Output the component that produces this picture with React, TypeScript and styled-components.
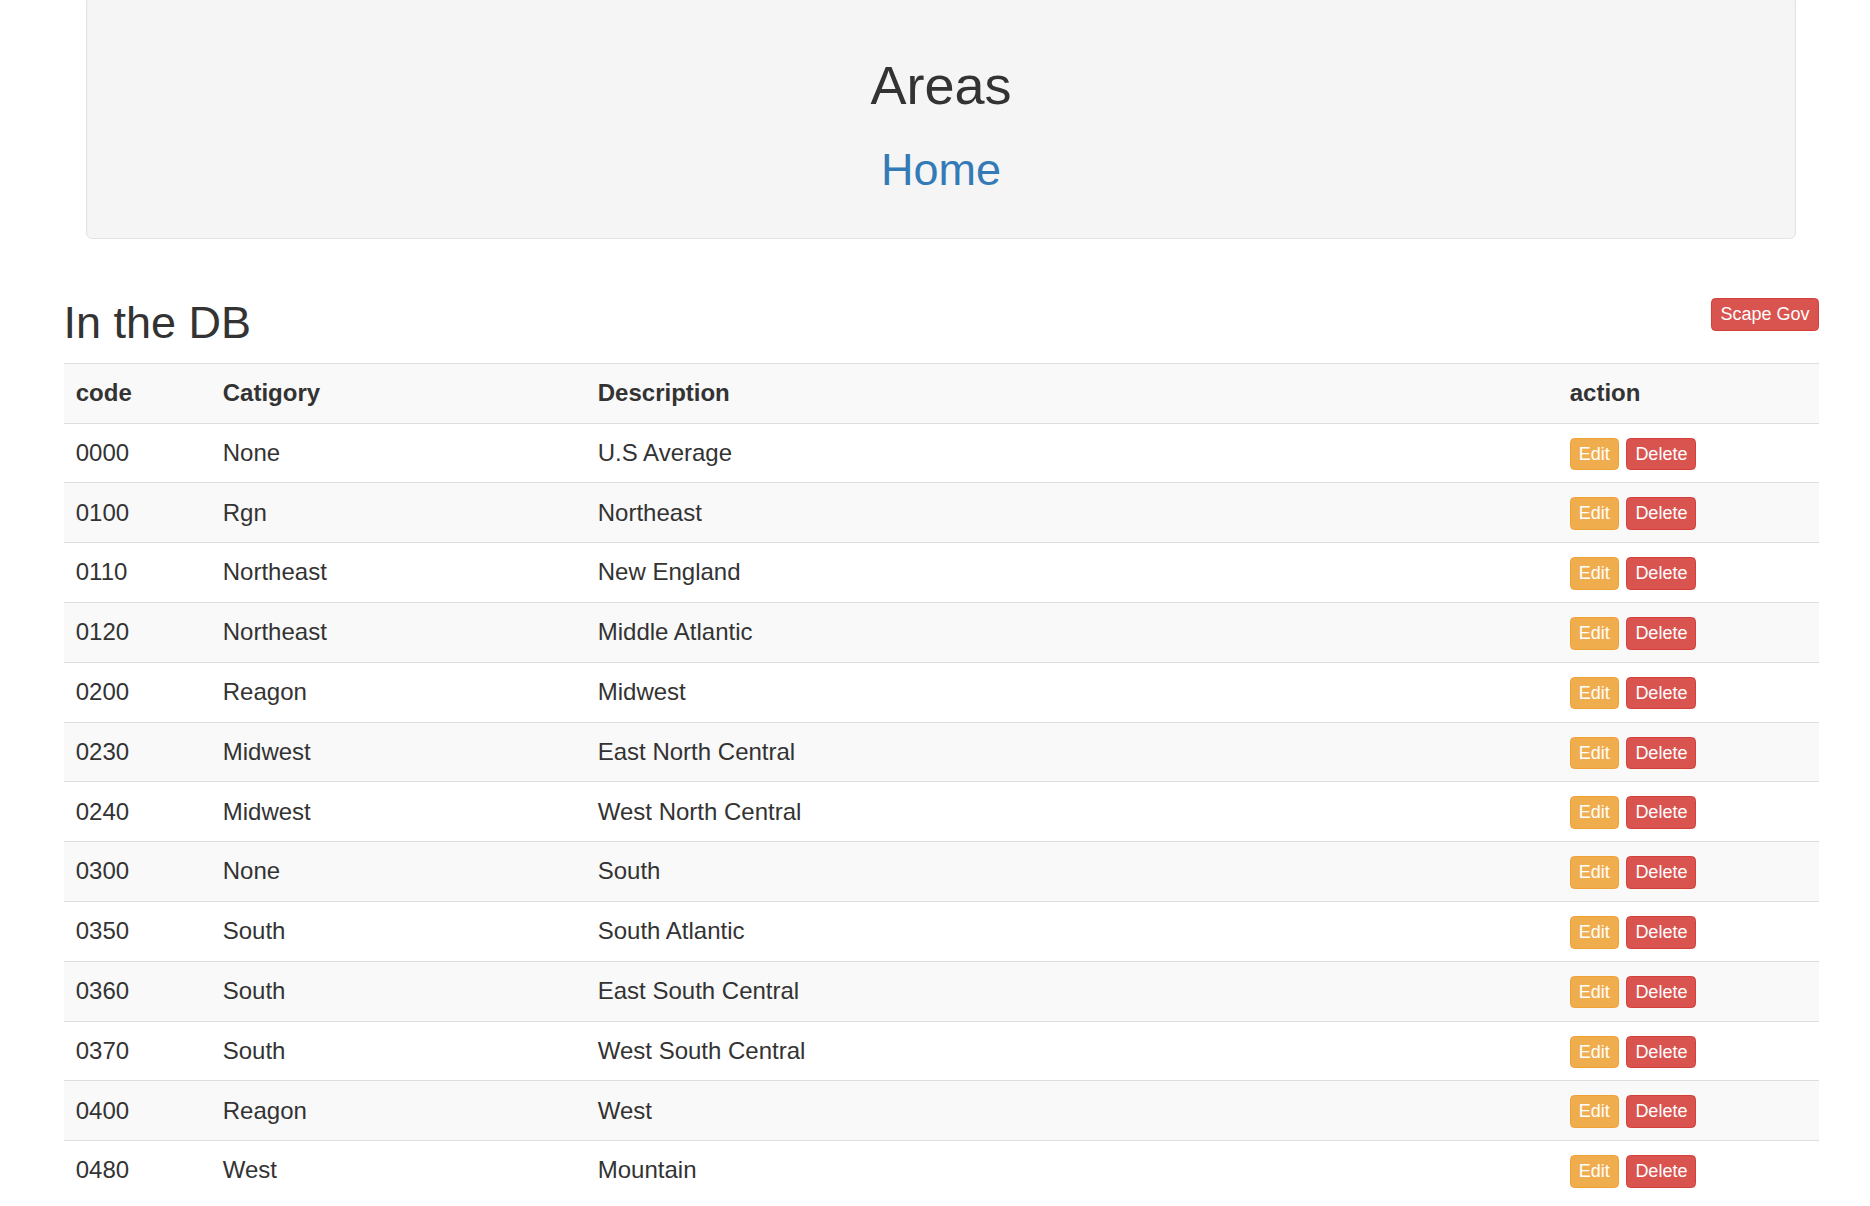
import React from "react";
import styled, { createGlobalStyle } from "styled-components";

const GlobalStyle = createGlobalStyle`
  html, body {
    margin: 0;
    padding: 0;
    overflow: hidden;
    background: #fff;
  }
  body {
    font-family: "Liberation Sans", Arial, Helvetica, sans-serif;
    font-size: 24px;
    line-height: 1.42857143;
    color: #333;
  }
  * { box-sizing: border-box; }
`;

const Container = styled.div`
  width: 1755px;
  margin-left: 63.5px;
  padding: 0 22.5px;
`;

const Well = styled.div`
  margin-top: -3.9px;
  margin-bottom: 30px;
  padding: 28.5px;
  background: #f5f5f5;
  border: 1px solid #e3e3e3;
  border-radius: 6px;
  box-shadow: inset 0 1.5px 1.5px rgba(0, 0, 0, 0.05);
  text-align: center;
`;

const PageTitle = styled.h1`
  margin: 30px 0 15px;
  font-size: 54px;
  line-height: 1.1;
  font-weight: 500;
  color: #333;
`;

const SubTitle = styled.h2`
  margin: 30px 0 15px;
  font-size: 45px;
  line-height: 1.1;
  font-weight: 500;
`;

const HomeLink = styled.a`
  color: #337ab7;
  text-decoration: none;
`;

const Row = styled.div`
  display: flow-root;
  margin: 0 -22.5px;
`;

const SectionHeader = styled.div`
  display: flex;
  justify-content: space-between;
  align-items: flex-start;
  margin-top: 29.3px;
`;

const SectionTitle = styled.h2`
  margin: 0 0 15px;
  font-size: 45px;
  line-height: 1.1;
  font-weight: 500;
  color: #333;
`;

const Button = styled.button<{ $variant: "danger" | "warning" }>`
  display: inline-block;
  margin: 0;
  padding: 2px 8px;
  font-family: inherit;
  font-size: 18px;
  line-height: 27px;
  font-weight: 400;
  color: #fff;
  white-space: nowrap;
  vertical-align: middle;
  cursor: pointer;
  border-radius: 4.5px;
  border: 1px solid
    ${(p) => (p.$variant === "danger" ? "#d43f3a" : "#eea236")};
  background: ${(p) => (p.$variant === "danger" ? "#d9534f" : "#f0ad4e")};
`;

const Table = styled.table`
  width: 100%;
  table-layout: fixed;
  border-collapse: collapse;
  border-spacing: 0;
  margin-bottom: 30px;
`;

const TR = styled.tr`
  &:nth-of-type(odd) {
    background: #f9f9f9;
  }
`;

const TH = styled.th`
  padding: 12.25px;
  line-height: 34.29px;
  text-align: left;
  font-weight: 700;
  vertical-align: top;
  border-top: 1px solid #ddd;
`;

const TD = styled.td`
  padding: 12.25px;
  line-height: 34.29px;
  vertical-align: top;
  border-top: 1px solid #ddd;
`;

const ActionGroup = styled.div`
  display: flex;
  gap: 7.6px;
  padding-top: 1.8px;
  height: 34.29px;
`;

const rows: [string, string, string][] = [
  ["0000", "None", "U.S Average"],
  ["0100", "Rgn", "Northeast"],
  ["0110", "Northeast", "New England"],
  ["0120", "Northeast", "Middle Atlantic"],
  ["0200", "Reagon", "Midwest"],
  ["0230", "Midwest", "East North Central"],
  ["0240", "Midwest", "West North Central"],
  ["0300", "None", "South"],
  ["0350", "South", "South Atlantic"],
  ["0360", "South", "East South Central"],
  ["0370", "South", "West South Central"],
  ["0400", "Reagon", "West"],
  ["0480", "West", "Mountain"],
];

export default function App() {
  return (
    <>
      <GlobalStyle />
      <Container>
        <Well>
          <PageTitle>Areas</PageTitle>
          <SubTitle>
            <HomeLink href="#">Home</HomeLink>
          </SubTitle>
        </Well>
        <Row>
          <SectionHeader>
            <SectionTitle>In the DB</SectionTitle>
            <Button $variant="danger">Scape Gov</Button>
          </SectionHeader>
          <Table>
            <colgroup>
              <col style={{ width: 147 }} />
              <col style={{ width: 375 }} />
              <col style={{ width: 972 }} />
              <col />
            </colgroup>
            <tbody>
              <TR>
                <TH>code</TH>
                <TH>Catigory</TH>
                <TH>Description</TH>
                <TH>action</TH>
              </TR>
              {rows.map(([code, cat, desc]) => (
                <TR key={code}>
                  <TD>{code}</TD>
                  <TD>{cat}</TD>
                  <TD>{desc}</TD>
                  <TD>
                    <ActionGroup>
                      <Button $variant="warning">Edit</Button>
                      <Button $variant="danger">Delete</Button>
                    </ActionGroup>
                  </TD>
                </TR>
              ))}
            </tbody>
          </Table>
        </Row>
      </Container>
    </>
  );
}
